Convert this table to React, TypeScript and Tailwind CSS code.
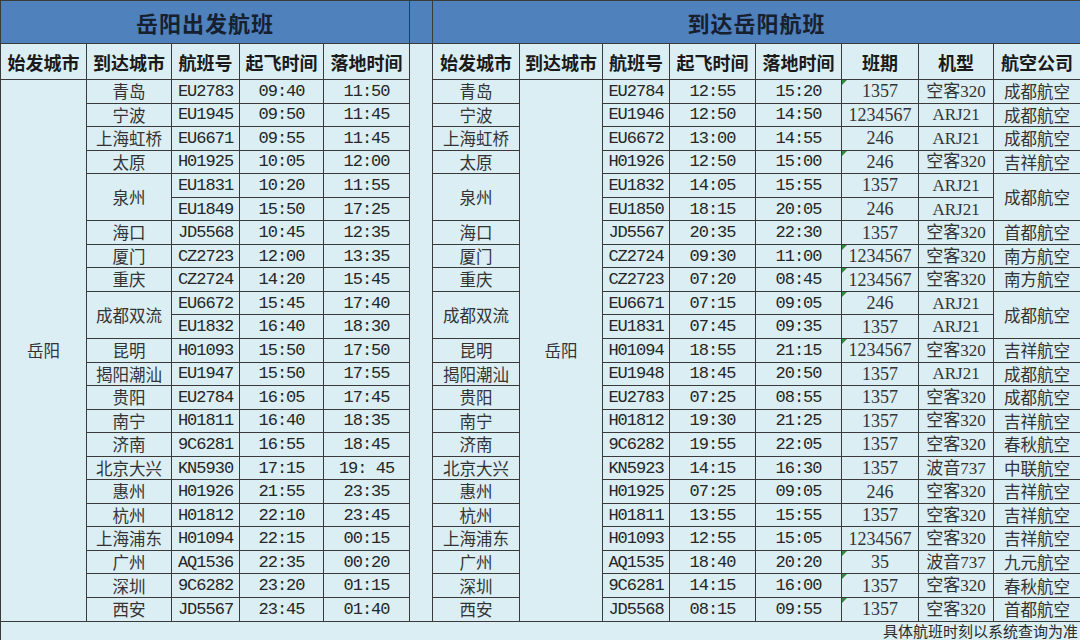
import React from 'react';

type Dep = { city?: string; span?: number; no: string; dep: string; arr: string };
type Arr = { city?: string; span?: number; no: string; dep: string; arr: string; days: string; plane: string; air?: string; airSpan?: number; mark?: boolean };

const departures: Dep[] = [
  { city: '青岛', no: 'EU2783', dep: '09:40', arr: '11:50' },
  { city: '宁波', no: 'EU1945', dep: '09:50', arr: '11:45' },
  { city: '上海虹桥', no: 'EU6671', dep: '09:55', arr: '11:45' },
  { city: '太原', no: 'H01925', dep: '10:05', arr: '12:00' },
  { city: '泉州', span: 2, no: 'EU1831', dep: '10:20', arr: '11:55' },
  { no: 'EU1849', dep: '15:50', arr: '17:25' },
  { city: '海口', no: 'JD5568', dep: '10:45', arr: '12:35' },
  { city: '厦门', no: 'CZ2723', dep: '12:00', arr: '13:35' },
  { city: '重庆', no: 'CZ2724', dep: '14:20', arr: '15:45' },
  { city: '成都双流', span: 2, no: 'EU6672', dep: '15:45', arr: '17:40' },
  { no: 'EU1832', dep: '16:40', arr: '18:30' },
  { city: '昆明', no: 'H01093', dep: '15:50', arr: '17:50' },
  { city: '揭阳潮汕', no: 'EU1947', dep: '15:50', arr: '17:55' },
  { city: '贵阳', no: 'EU2784', dep: '16:05', arr: '17:45' },
  { city: '南宁', no: 'H01811', dep: '16:40', arr: '18:35' },
  { city: '济南', no: '9C6281', dep: '16:55', arr: '18:45' },
  { city: '北京大兴', no: 'KN5930', dep: '17:15', arr: '19: 45' },
  { city: '惠州', no: 'H01926', dep: '21:55', arr: '23:35' },
  { city: '杭州', no: 'H01812', dep: '22:10', arr: '23:45' },
  { city: '上海浦东', no: 'H01094', dep: '22:15', arr: '00:15' },
  { city: '广州', no: 'AQ1536', dep: '22:35', arr: '00:20' },
  { city: '深圳', no: '9C6282', dep: '23:20', arr: '01:15' },
  { city: '西安', no: 'JD5567', dep: '23:45', arr: '01:40' },
];

const arrivals: Arr[] = [
  { city: '青岛', no: 'EU2784', dep: '12:55', arr: '15:20', days: '1357', plane: '空客320', air: '成都航空', mark: true },
  { city: '宁波', no: 'EU1946', dep: '12:50', arr: '14:50', days: '1234567', plane: 'ARJ21', air: '成都航空' },
  { city: '上海虹桥', no: 'EU6672', dep: '13:00', arr: '14:55', days: '246', plane: 'ARJ21', air: '成都航空' },
  { city: '太原', no: 'H01926', dep: '12:50', arr: '15:00', days: '246', plane: '空客320', air: '吉祥航空', mark: true },
  { city: '泉州', span: 2, no: 'EU1832', dep: '14:05', arr: '15:55', days: '1357', plane: 'ARJ21', air: '成都航空', airSpan: 2 },
  { no: 'EU1850', dep: '18:15', arr: '20:05', days: '246', plane: 'ARJ21' },
  { city: '海口', no: 'JD5567', dep: '20:35', arr: '22:30', days: '1357', plane: '空客320', air: '首都航空' },
  { city: '厦门', no: 'CZ2724', dep: '09:30', arr: '11:00', days: '1234567', plane: '空客320', air: '南方航空', mark: true },
  { city: '重庆', no: 'CZ2723', dep: '07:20', arr: '08:45', days: '1234567', plane: '空客320', air: '南方航空', mark: true },
  { city: '成都双流', span: 2, no: 'EU6671', dep: '07:15', arr: '09:05', days: '246', plane: 'ARJ21', air: '成都航空', airSpan: 2, mark: true },
  { no: 'EU1831', dep: '07:45', arr: '09:35', days: '1357', plane: 'ARJ21' },
  { city: '昆明', no: 'H01094', dep: '18:55', arr: '21:15', days: '1234567', plane: '空客320', air: '吉祥航空', mark: true },
  { city: '揭阳潮汕', no: 'EU1948', dep: '18:45', arr: '20:50', days: '1357', plane: 'ARJ21', air: '成都航空' },
  { city: '贵阳', no: 'EU2783', dep: '07:25', arr: '08:55', days: '1357', plane: '空客320', air: '成都航空' },
  { city: '南宁', no: 'H01812', dep: '19:30', arr: '21:25', days: '1357', plane: '空客320', air: '吉祥航空' },
  { city: '济南', no: '9C6282', dep: '19:55', arr: '22:05', days: '1357', plane: '空客320', air: '春秋航空' },
  { city: '北京大兴', no: 'KN5923', dep: '14:15', arr: '16:30', days: '1357', plane: '波音737', air: '中联航空' },
  { city: '惠州', no: 'H01925', dep: '07:25', arr: '09:05', days: '246', plane: '空客320', air: '吉祥航空' },
  { city: '杭州', no: 'H01811', dep: '13:55', arr: '15:55', days: '1357', plane: '空客320', air: '吉祥航空' },
  { city: '上海浦东', no: 'H01093', dep: '12:55', arr: '15:05', days: '1234567', plane: '空客320', air: '吉祥航空' },
  { city: '广州', no: 'AQ1535', dep: '18:40', arr: '20:20', days: '35', plane: '波音737', air: '九元航空', mark: true },
  { city: '深圳', no: '9C6281', dep: '14:15', arr: '16:00', days: '1357', plane: '空客320', air: '春秋航空', mark: true },
  { city: '西安', no: 'JD5568', dep: '08:15', arr: '09:55', days: '1357', plane: '空客320', air: '首都航空', mark: true },
];

const leftHeads = ['始发城市', '到达城市', '航班号', '起飞时间', '落地时间'];
const rightHeads = ['始发城市', '到达城市', '航班号', '起飞时间', '落地时间', '班期', '机型', '航空公司'];

// column widths, left table | gap | right table
const widths = [86, 85, 68, 84, 86, 23, 87, 83, 67, 86, 86, 77, 75, 87];

const cell = 'border border-[#3a3a3a] p-0 text-center align-middle whitespace-nowrap';
const cjk = 'text-[16.5px] text-[#333]';
const mono = "font-['Liberation_Mono',monospace] text-[17px] tracking-[-1px] text-[#262626]";
const serif = "font-['Liberation_Serif','Noto_Sans_CJK_SC',serif] text-[17px] text-[#333]";

export default function App() {
  return (
    <div className="w-[1080px] h-[640px] overflow-hidden bg-[#daeef3] font-['Noto_Sans_CJK_SC',sans-serif]">
      <table className="w-[1080px] table-fixed border-collapse leading-none">
        <colgroup>
          {widths.map((w, i) => (
            <col key={i} style={{ width: w }} />
          ))}
        </colgroup>
        <tbody>
          {/* titles */}
          <tr className="h-[43px] bg-[#4f81bd]">
            <td colSpan={5} className={`${cell} text-[22px] font-bold text-[#16202e] tracking-[1px]`}>
              岳阳出发航班
            </td>
            <td className={cell}></td>
            <td colSpan={8} className={`${cell} text-[22px] font-bold text-[#16202e] tracking-[1px]`}>
              到达岳阳航班
            </td>
          </tr>

          {/* column heads */}
          <tr className="h-[36px]">
            {leftHeads.map((h) => (
              <td key={'l' + h} className={`${cell} text-[18px] font-bold text-[#1a1a1a]`}>
                {h}
              </td>
            ))}
            <td rowSpan={24} className="border-x border-[#3a3a3a] p-0"></td>
            {rightHeads.map((h) => (
              <td key={'r' + h} className={`${cell} text-[18px] font-bold text-[#1a1a1a]`}>
                {h}
              </td>
            ))}
          </tr>

          {/* flights */}
          {departures.map((d, i) => {
            const a = arrivals[i];
            return (
              <tr key={i} className="h-[23.56px]">
                {i === 0 && (
                  <td rowSpan={23} className={`${cell} ${cjk}`}>
                    岳阳
                  </td>
                )}
                {d.city && (
                  <td rowSpan={d.span || 1} className={`${cell} ${cjk}`}>
                    {d.city}
                  </td>
                )}
                <td className={`${cell} ${mono}`}>{d.no}</td>
                <td className={`${cell} ${mono}`}>{d.dep}</td>
                <td className={`${cell} ${mono}`}>{d.arr}</td>

                {a.city && (
                  <td rowSpan={a.span || 1} className={`${cell} ${cjk}`}>
                    {a.city}
                  </td>
                )}
                {i === 0 && (
                  <td rowSpan={23} className={`${cell} ${cjk}`}>
                    岳阳
                  </td>
                )}
                <td className={`${cell} ${mono}`}>{a.no}</td>
                <td className={`${cell} ${mono}`}>{a.dep}</td>
                <td className={`${cell} ${mono}`}>{a.arr}</td>
                <td className={`${cell} ${serif} text-[18px] relative`}>
                  {a.mark && (
                    <span className="absolute left-0 top-0 w-0 h-0 border-t-[5px] border-r-[5px] border-t-[#2e8b3a] border-r-transparent"></span>
                  )}
                  {a.days}
                </td>
                <td className={`${cell} ${serif}`}>{a.plane}</td>
                {a.air && (
                  <td rowSpan={a.airSpan || 1} className={`${cell} ${cjk}`}>
                    {a.air}
                  </td>
                )}
              </tr>
            );
          })}

          {/* footnote */}
          <tr className="h-[19px]">
            <td colSpan={14} className="border border-[#3a3a3a] p-0 pr-[2px] text-right align-middle text-[15px] text-[#2b2b2b] leading-[16px]">
              具体航班时刻以系统查询为准
            </td>
          </tr>
        </tbody>
      </table>
    </div>
  );
}
